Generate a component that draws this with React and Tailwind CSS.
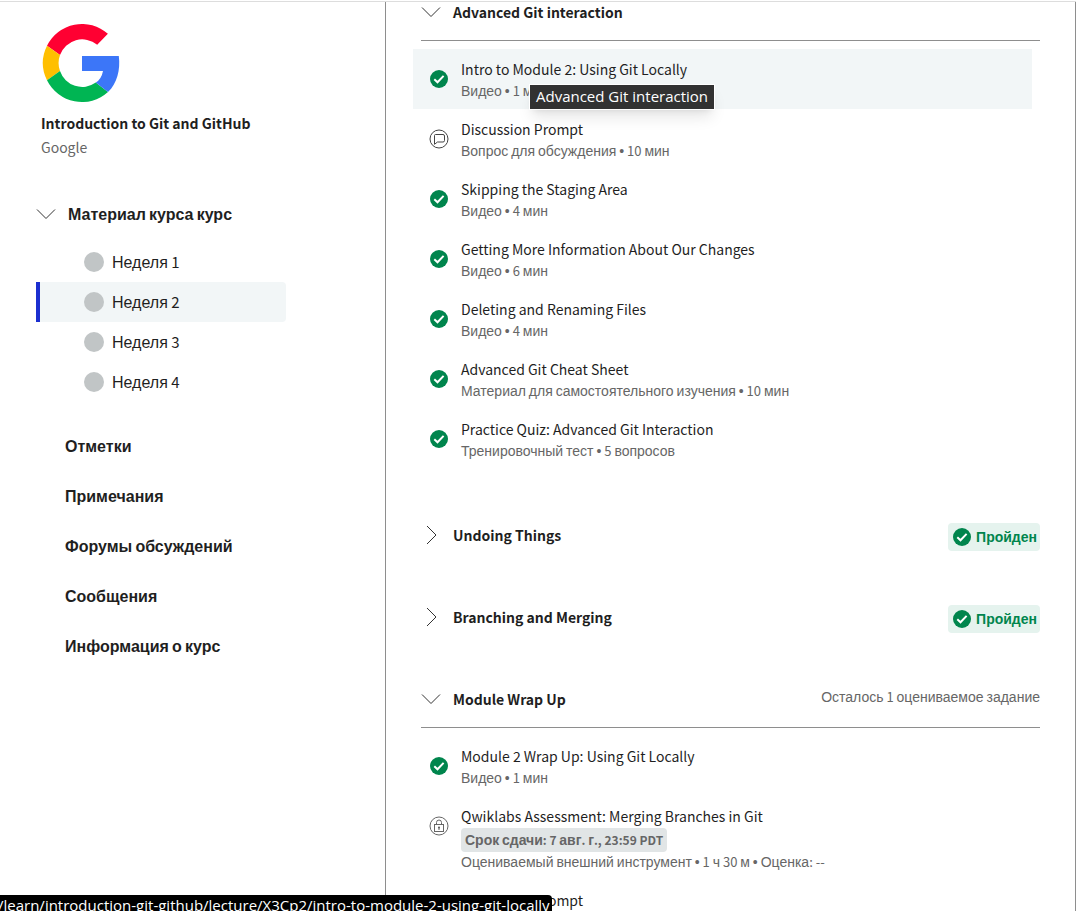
const latin = 'font-["Noto_Sans_CJK_SC",sans-serif]'

// Cyrillic runs and bullets use the Arial-metric face, everything else the humanist one.
function Text({ children, size = 'text-[14px]', cyr = 'text-[16px]' }) {
  const runs = children.match(/[\u0400-\u04ff\u2022]+|[^\u0400-\u04ff\u2022]+/g) || []
  return (
    <span className={`${latin} ${size}`}>
      {runs.map((run, i) =>
        /[\u0400-\u04ff\u2022]/.test(run) ? (
          <span key={i} className={`font-["Liberation_Sans",sans-serif] leading-none ${cyr}`}>
            {run}
          </span>
        ) : (
          run
        ),
      )}
    </span>
  )
}

function Small({ children }) {
  return (
    <Text size="text-[13px]" cyr="text-[14px]">
      {children}
    </Text>
  )
}

function GoogleLogo() {
  return (
    <svg width="80" height="80" viewBox="0 0 80 80" role="img" aria-label="Google">
      <path fill="#ff0032" d="M6 22.7A39 39 0 0 1 66.9 10.8L56.2 21.8A23.5 23.5 0 0 0 19 32Z" />
      <path fill="#ffbf00" d="M6 22.7A39 39 0 0 0 6 57.3L19 48A23.5 23.5 0 0 1 19 32Z" />
      <path fill="#00b553" d="M6 57.3A39 39 0 0 0 67 69.1L54.8 59.6A23.5 23.5 0 0 1 19 48Z" />
      <path fill="#3c76f8" d="M41 33H77.8C79.6 47 76 60.5 67 69.1L54.8 59.6Q60.5 56 62 48H41Z" />
    </svg>
  )
}

function Chevron({ open }) {
  return (
    <svg width="20" height="20" viewBox="0 0 20 20" fill="none" stroke="#333" strokeWidth="1" className="shrink-0" aria-hidden="true">
      <path d={open ? 'M1 5.5L10 14.5L19 5.5' : 'M6 1L15 10L6 19'} />
    </svg>
  )
}

function CheckIcon() {
  return (
    <svg width="18" height="18" viewBox="0 0 18 18" className="shrink-0" aria-hidden="true">
      <circle cx="9" cy="9" r="9" fill="#00854d" />
      <path d="M4.3 9.3L7.5 12.3L13.6 5.9" fill="none" stroke="#fff" strokeWidth="2" />
    </svg>
  )
}

function ChatIcon() {
  return (
    <svg width="20" height="20" viewBox="0 0 20 20" fill="none" stroke="#444" strokeWidth="1" className="shrink-0" aria-hidden="true">
      <circle cx="10" cy="10" r="9" />
      <path d="M6.5 5.5H14Q15.5 5.5 15.5 7V11.5Q15.5 13 14 13H8.5L5.5 15.3V6.5Q5.5 5.5 6.5 5.5Z" />
    </svg>
  )
}

function LockIcon() {
  return (
    <svg width="20" height="20" viewBox="0 0 20 20" fill="none" stroke="#666" strokeWidth="1" className="shrink-0" aria-hidden="true">
      <circle cx="10" cy="10" r="9" />
      <rect x="5.5" y="8.5" width="9" height="7" />
      <path d="M7.5 8.5V6.5A2.5 2.5 0 0 1 12.5 6.5V8.5" />
      <circle cx="10" cy="11.6" r="1" fill="#555" stroke="none" />
      <path d="M10 12V14" />
    </svg>
  )
}

function SectionHeader({ title, open, children }) {
  return (
    <div className={`flex h-[55px] items-center border-b pb-0.5 ${open ? 'border-[#8e8e8e]' : 'border-transparent'}`}>
      <button type="button" aria-expanded={open} className="flex items-center gap-3 text-left font-bold">
        <Chevron open={open} />
        <span className="leading-6"><Text>{title}</Text></span>
      </button>
      <div className="ml-auto">{children}</div>
    </div>
  )
}

function Passed() {
  return (
    <div className="mt-1 flex h-7 items-center gap-1 rounded bg-[#e5f3ee] pl-1 pr-[3px] font-bold leading-6 text-[#00854d]">
      <span className="flex w-5 justify-center"><CheckIcon /></span>
      <span className="pb-0.5"><Text cyr="text-[14px]">Пройден</Text></span>
    </div>
  )
}

const icons = { check: CheckIcon, chat: ChatIcon, lock: LockIcon }

function Item({ icon, title, due, meta, active }) {
  const Icon = icons[icon]
  return (
    <li>
      <a href="#item" className={`flex gap-3 px-4 py-2.5 ${active ? 'bg-[#f2f6f7]' : ''}`}>
        <span className="flex h-10 w-5 shrink-0 items-center justify-center"><Icon /></span>
        <span className="flex min-w-0 flex-col items-start">
          <span className="h-5 leading-5 text-[#1f1f1f]"><Text>{title}</Text></span>
          {due && (
            <span className="mt-0.5 h-6 rounded bg-[#e1e5e6] px-1 font-bold leading-[22px] text-[#666]">
              <Text size="text-[12px]" cyr="text-[14px]">{due}</Text>
            </span>
          )}
          <span className={`text-[#666] ${due ? 'h-[18px] leading-[18px]' : 'h-5 leading-[22px]'}`}><Small>{meta}</Small></span>
        </span>
      </a>
    </li>
  )
}

const gitItems = [
  { icon: 'check', title: 'Intro to Module 2: Using Git Locally', meta: 'Видео • 1 мин', active: true },
  { icon: 'chat', title: 'Discussion Prompt', meta: 'Вопрос для обсуждения • 10 мин' },
  { icon: 'check', title: 'Skipping the Staging Area', meta: 'Видео • 4 мин' },
  { icon: 'check', title: 'Getting More Information About Our Changes', meta: 'Видео • 6 мин' },
  { icon: 'check', title: 'Deleting and Renaming Files', meta: 'Видео • 4 мин' },
  { icon: 'check', title: 'Advanced Git Cheat Sheet', meta: 'Материал для самостоятельного изучения • 10 мин' },
  { icon: 'check', title: 'Practice Quiz: Advanced Git Interaction', meta: 'Тренировочный тест • 5 вопросов' },
]

const wrapItems = [
  { icon: 'check', title: 'Module 2 Wrap Up: Using Git Locally', meta: 'Видео • 1 мин' },
  {
    icon: 'lock',
    title: 'Qwiklabs Assessment: Merging Branches in Git',
    due: 'Срок сдачи: 7 авг. г., 23:59 PDT',
    meta: 'Оцениваемый внешний инструмент • 1 ч 30 м • Оценка: --',
  },
  { icon: 'chat', title: 'Discussion Prompt', meta: 'Вопрос для обсуждения • 10 мин' },
]

const weeks = ['Неделя 1', 'Неделя 2', 'Неделя 3', 'Неделя 4']
const links = ['Отметки', 'Примечания', 'Форумы обсуждений', 'Сообщения', 'Информация о курс']

function Items({ items }) {
  return (
    <ul className="-ml-2 mr-2 mt-2">
      {items.map((item, i) => (
        <Item key={i} {...item} />
      ))}
    </ul>
  )
}

export default function App() {
  return (
    <div className='relative h-screen overflow-hidden bg-white pt-px font-["Noto_Sans_CJK_SC",sans-serif] text-[14px] text-[#1f1f1f]'>
      <div className="flex h-full border-t border-[#dddddd]">
        <aside className="w-[386px] shrink-0 border-r border-[#8e8e8e] pl-9 pt-[21px]">
          <div className="pl-[5px]">
            <GoogleLogo />
            <h1 className="mt-2 font-bold leading-6"><Text>Introduction to Git and GitHub</Text></h1>
            <p className="leading-6 text-[#666]"><Text>Google</Text></p>
          </div>
          <nav className="mt-[43px]">
            <button type="button" aria-expanded="true" className="flex h-6 items-center gap-3 font-bold">
              <Chevron open />
              <span className="leading-6"><Text>Материал курса курс</Text></span>
            </button>
            <ul className="mt-4 w-[250px]">
              {weeks.map((week, i) => (
                <li key={week}>
                  <a
                    href="#week"
                    className={`flex h-10 items-center gap-2 rounded-r border-l-4 pl-11 leading-6 ${i === 1 ? 'border-[#1c2fd0] bg-[#f2f6f7]' : 'border-transparent'}`}
                  >
                    <span className="size-5 rounded-full bg-[#c1c5c6]" />
                    <span><Text size="text-[15px]">{week}</Text></span>
                  </a>
                </li>
              ))}
            </ul>
            <ul className="mt-[19px] pl-[29px]">
              {links.map((link) => (
                <li key={link} className="flex h-[50px] items-center font-bold leading-6">
                  <a href="#link"><Text>{link}</Text></a>
                </li>
              ))}
            </ul>
          </nav>
        </aside>

        <main className="min-w-0 grow overflow-hidden border-r border-[#8e8e8e] pl-[35px] pr-[35px]">
          <section className="-mt-4 mb-10">
            <SectionHeader title="Advanced Git interaction" open />
            <Items items={gitItems} />
          </section>
          <section className="mb-[27px]">
            <SectionHeader title="Undoing Things" open={false}><Passed /></SectionHeader>
          </section>
          <section className="mb-[27px]">
            <SectionHeader title="Branching and Merging" open={false}><Passed /></SectionHeader>
          </section>
          <section>
            <SectionHeader title="Module Wrap Up" open>
              <p className="-mt-1.5 leading-6 text-[#666]"><Small>Осталось 1 оцениваемое задание</Small></p>
            </SectionHeader>
            <Items items={wrapItems} />
          </section>
        </main>
      </div>

      <div
        role="tooltip"
        className='absolute left-[529px] top-[84px] h-[26px] whitespace-nowrap border border-white bg-[#323232] px-1.5 font-["Open_Sans",sans-serif] text-[15px] leading-[22px] text-white shadow-lg'
      >
        Advanced Git interaction
      </div>
      <div className='absolute bottom-0 -left-1 h-4 overflow-hidden whitespace-nowrap rounded-tr bg-black px-0.5 font-["Open_Sans",sans-serif] text-[15px] leading-5 text-white'>
        /learn/introduction-git-github/lecture/X3Cp2/intro-to-module-2-using-git-locally
      </div>
    </div>
  )
}
